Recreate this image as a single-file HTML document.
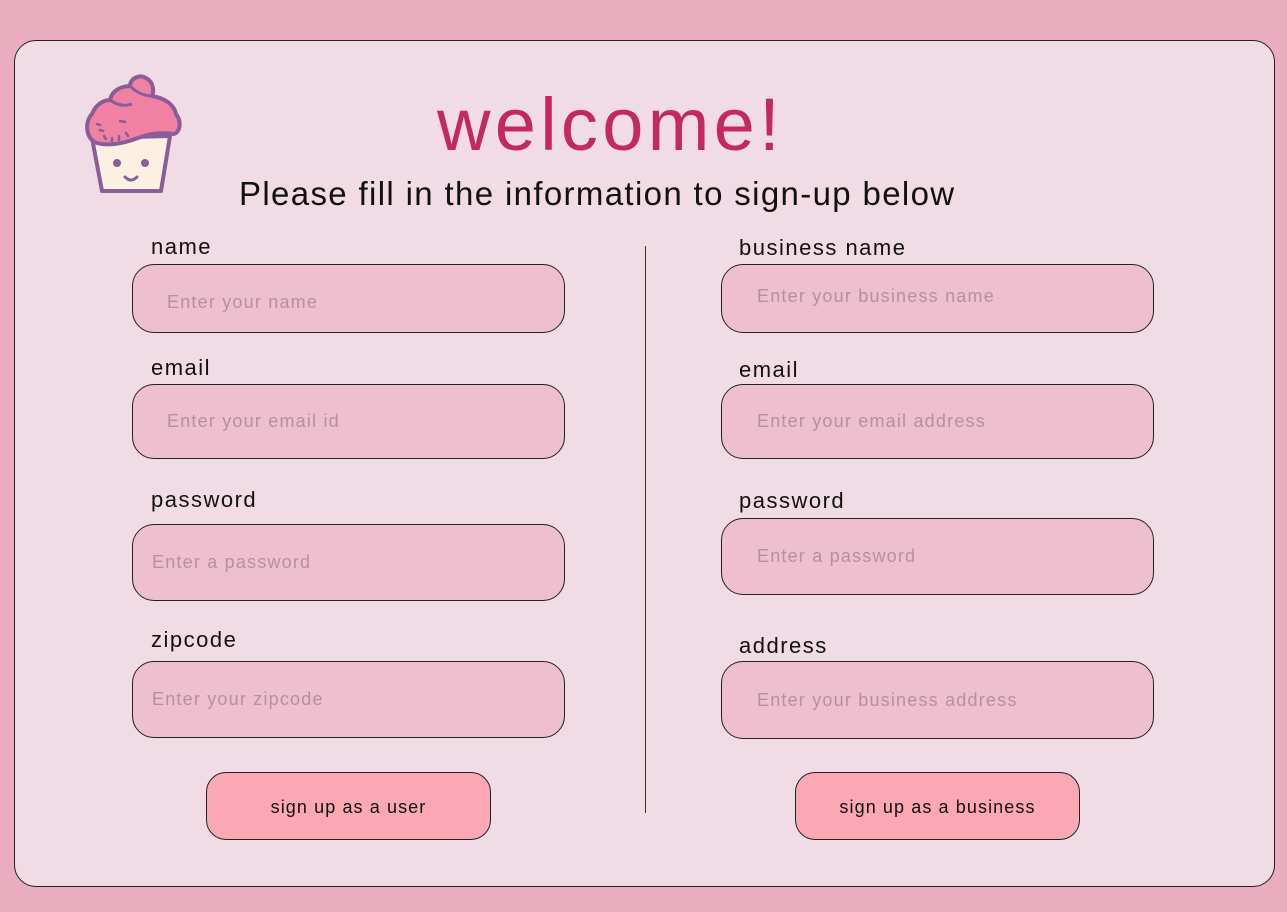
<!DOCTYPE html>
<html><head><style>
*{margin:0;padding:0;box-sizing:border-box}
body{width:1287px;height:912px;background:#eaadbf;font-family:"Liberation Sans",sans-serif;position:relative;overflow:hidden}
.card{position:absolute;left:14px;top:40px;width:1261px;height:847px;background:#f1dbe4;border:1px solid #222;border-radius:22px}
.t{position:absolute;white-space:nowrap}
.lbl{position:absolute;font-size:22px;color:#111;letter-spacing:1.5px}
.in{position:absolute;width:433px;background:#edbfcf;border:1px solid #222;border-radius:22px;font-size:18px;color:#b690a2;display:flex;align-items:center;letter-spacing:1.2px}
.btn{position:absolute;width:285px;height:68px;background:#fba8b4;border:1px solid #222;border-radius:20px;font-size:18px;color:#111;display:flex;align-items:center;justify-content:center;letter-spacing:1.1px}
</style></head><body>
<div class="card"></div>
<svg style="position:absolute;left:80px;top:70px" width="110" height="130" viewBox="80 70 110 130">
<path d="M92 138 L170 136 L161 191 L102 191 Z" fill="#fbf0e2" stroke="#8a5c9a" stroke-width="4" stroke-linejoin="round"/>
<path d="M97 143 C86 140 84 122 92 114 C96 104 104 100 110 100 C112 90 122 86 130 86 C130 78 140 74 146 78 C154 82 154 92 152 96 C164 98 174 104 176 114 C182 122 180 132 174 134 C160 132 148 134 138 138 C122 144 108 146 97 143 Z" fill="#f081a3" stroke="#8a5c9a" stroke-width="4" stroke-linejoin="round"/>
<path d="M130 86 C136 92 144 96 152 96" fill="none" stroke="#8a5c9a" stroke-width="3"/>
<path d="M110 100 C118 106 126 106 132 104" fill="none" stroke="#8a5c9a" stroke-width="3"/>
<g stroke="#8a5c9a" stroke-width="2.5" stroke-linecap="round">
<path d="M97 124 L100 125"/><path d="M100 130 L103 131"/><path d="M104 136 L106 139"/><path d="M112 138 L112 141"/><path d="M119 136 L119 140"/><path d="M126 133 L128 136"/><path d="M120 121 L125 122"/></g>
<circle cx="117" cy="163" r="4" fill="#8a5c9a"/><circle cx="145" cy="163" r="4" fill="#8a5c9a"/>
<path d="M125 177 Q131 183 137 177" fill="none" stroke="#8a5c9a" stroke-width="3" stroke-linecap="round"/>
</svg>
<div class="t" style="left:437px;top:82px;font-size:74px;color:#c2295f;letter-spacing:4.3px">welcome!</div>
<div class="t" style="left:239px;top:175px;font-size:33px;color:#111;letter-spacing:1.35px">Please fill in the information to sign-up below</div>
<div style="position:absolute;left:645px;top:246px;width:1px;height:567px;background:#333"></div>

<div class="lbl" style="left:151px;top:234px">name</div>
<div class="in" style="left:132px;top:264px;height:69px;padding-left:34px;padding-top:8px">Enter your name</div>
<div class="lbl" style="left:151px;top:355px">email</div>
<div class="in" style="left:132px;top:384px;height:75px;padding-left:34px">Enter your email id</div>
<div class="lbl" style="left:151px;top:487px">password</div>
<div class="in" style="left:132px;top:524px;height:77px;padding-left:19px">Enter a password</div>
<div class="lbl" style="left:151px;top:627px">zipcode</div>
<div class="in" style="left:132px;top:661px;height:77px;padding-left:19px">Enter your zipcode</div>
<div class="btn" style="left:206px;top:772px;padding-top:2px">sign up as a user</div>

<div class="lbl" style="left:739px;top:235px">business name</div>
<div class="in" style="left:721px;top:264px;height:69px;padding-left:35px;align-items:flex-start;padding-top:21px">Enter your business name</div>
<div class="lbl" style="left:739px;top:357px">email</div>
<div class="in" style="left:721px;top:384px;height:75px;padding-left:35px">Enter your email address</div>
<div class="lbl" style="left:739px;top:488px">password</div>
<div class="in" style="left:721px;top:518px;height:77px;padding-left:35px">Enter a password</div>
<div class="lbl" style="left:739px;top:633px">address</div>
<div class="in" style="left:721px;top:661px;height:78px;padding-left:35px">Enter your business address</div>
<div class="btn" style="left:795px;top:772px;padding-top:2px">sign up as a business</div>
</body></html>
